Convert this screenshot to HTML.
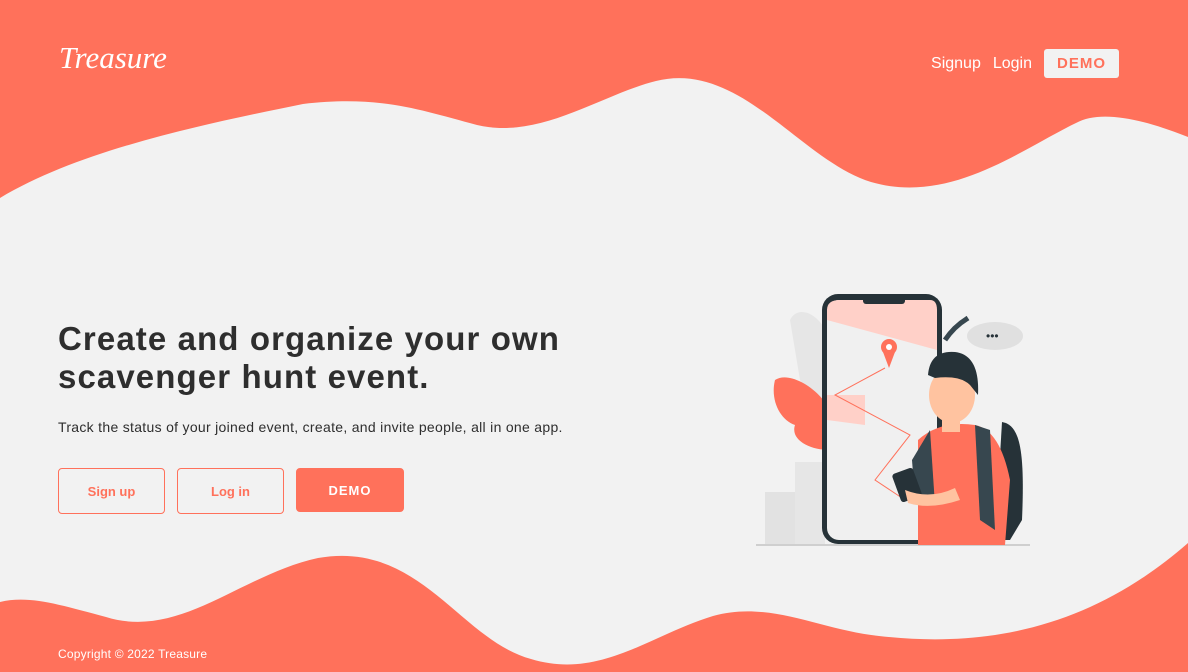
<!DOCTYPE html>
<html><head><meta charset="utf-8"><style>
*{margin:0;padding:0;box-sizing:border-box}
body{width:1188px;height:672px;overflow:hidden;background:#f2f2f2;font-family:"Liberation Sans",sans-serif;position:relative}
svg.bg{position:absolute;left:0;top:0}
.logo{position:absolute;left:59px;top:40px;color:#fff;font-family:"Liberation Serif",serif;font-style:italic;font-size:31px;letter-spacing:0px}
.nav{position:absolute;top:49px;right:69px;display:flex;align-items:center;color:#fff;font-size:16px}
.nav span{margin-right:12px}
.nav .d{background:#f2f2f2;color:#ff715b;font-weight:bold;letter-spacing:1px;width:75px;height:29px;border-radius:3px;display:flex;align-items:center;justify-content:center;font-size:15px}
h1{position:absolute;left:58px;top:320px;font-size:33px;line-height:38px;color:#2e2e2e;font-weight:bold;letter-spacing:1.1px}
p.sub{position:absolute;left:58px;top:419px;font-size:14px;color:#2e2e2e;letter-spacing:0.3px}
.btn{position:absolute;top:468px;height:46px;border:1px solid #ff715b;border-radius:4px;color:#ff715b;font-weight:bold;font-size:13px;display:flex;align-items:center;justify-content:center}
.foot{position:absolute;left:58px;top:647px;color:#fff;font-size:12px;letter-spacing:0.2px}
</style></head><body>
<svg class="bg" width="1188" height="672">
<rect width="1188" height="672" fill="#f2f2f2"/>
<path d="M0 0H1188V137C1140 118 1100 110 1076 123C1020 150 950 205 871 182C800 160 740 60 656 81C600 95 540 140 477 125C420 110 380 95 303 104C200 125 80 150 0 198Z" fill="#ff715b"/>
<path d="M0 672H1188V543C1100 620 1000 650 879 636C820 630 770 600 713 616C650 635 600 680 531 659C460 640 420 540 318 558C240 575 180 640 106 617C60 605 30 595 0 602Z" fill="#ff715b"/>
<g>
<path d="M790 320C800 300 830 320 830 350L830 420 800 380Z" fill="#e6e6e6"/>
<rect x="765" y="492" width="60" height="52" fill="#e2e2e2"/>
<rect x="795" y="462" width="30" height="82" fill="#e6e6e6"/>
<path d="M775 380C790 370 820 390 830 410L830 450C810 450 790 440 795 425C780 420 770 400 775 380Z" fill="#ff715b"/>
<line x1="756" y1="545" x2="1030" y2="545" stroke="#cfcfcf" stroke-width="2"/>
<rect x="822" y="294" width="120" height="250" rx="16" fill="#263238"/>
<rect x="827" y="300" width="110" height="240" rx="12" fill="#f0f0f0"/>
<path d="M827 310Q827 300 840 300H930Q937 300 937 310V350L827 320Z" fill="#ffd0c8"/>
<rect x="863" y="294" width="42" height="10" rx="3" fill="#263238"/>
<path d="M827 395L865 395 865 425 827 420Z" fill="#ffd0c8"/>
<circle cx="889" cy="347" r="8" fill="#ff715b"/><circle cx="889" cy="347" r="3" fill="#fff"/><path d="M883 352L889 368 895 352Z" fill="#ff715b"/>
<path d="M885 368L835 395 910 435 875 480 905 500" stroke="#ff715b" fill="none" stroke-width="1"/>
<ellipse cx="995" cy="336" rx="28" ry="14" fill="#e0e0e0"/>
<text x="986" y="340" font-size="12" fill="#263238">•••</text>
<path d="M945 340C955 325 965 320 968 318" stroke="#37474f" stroke-width="5" fill="none"/>
<path d="M1002 422C1020 425 1025 450 1022 520L1010 540 995 540Z" fill="#263238"/>
<path d="M918 440Q940 420 975 425Q1000 430 1010 480L1005 545H918Z" fill="#ff715b"/>
<path d="M912 460L930 430 935 505 915 500Z" fill="#37474f"/>
<path d="M975 425L990 430 995 530 980 520Z" fill="#37474f"/>
<ellipse cx="952" cy="395" rx="23" ry="28" fill="#ffc3a0"/>
<path d="M928 375Q930 350 955 352Q980 355 978 395L970 385Q960 375 935 378Z" fill="#263238"/>
<rect x="942" y="410" width="18" height="22" fill="#ffc3a0"/>
<rect x="896" y="470" width="22" height="30" rx="3" fill="#263238" transform="rotate(-20 907 485)"/>
<path d="M905 490Q930 500 955 488L960 500Q930 510 908 503Z" fill="#ffc3a0"/>
</g>
</svg>
<div class="logo">Treasure</div>
<div class="nav"><span>Signup</span><span>Login</span><div class="d">DEMO</div></div>
<h1>Create and organize your own<br>scavenger hunt event.</h1>
<p class="sub">Track the status of your joined event, create, and invite people, all in one app.</p>
<div class="btn" style="left:58px;width:107px">Sign up</div>
<div class="btn" style="left:177px;width:107px">Log in</div>
<div class="btn" style="left:296px;width:108px;height:44px;background:#ff715b;color:#fff;letter-spacing:1px">DEMO</div>
<div class="foot">Copyright © 2022 Treasure</div>
</body></html>
